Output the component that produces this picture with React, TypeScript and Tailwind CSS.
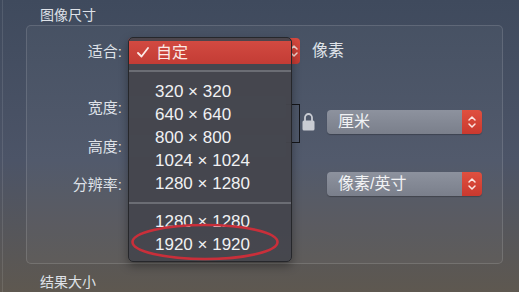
import React from "react";

const Chevrons = ({ cls }: { cls: string }) => (
  <svg width="10" height="16" viewBox="0 0 10 16" className={cls}>
    <path d="M2 6 L5 3 L8 6" fill="none" stroke="currentColor" strokeWidth="1.5" strokeLinecap="round" strokeLinejoin="round" />
    <path d="M2 10 L5 13 L8 10" fill="none" stroke="currentColor" strokeWidth="1.5" strokeLinecap="round" strokeLinejoin="round" />
  </svg>
);

const Dropdown = ({ label }: { label: string }) => (
  <div className="flex h-[24px] w-[155px] overflow-hidden rounded-[4px] shadow-[0_1px_1px_rgba(0,0,0,0.25)]">
    <div className="flex flex-1 items-center bg-[linear-gradient(180deg,#8d929e,#7a7f8b)] pl-[11px] text-[16px] leading-none text-[#f1f2f4]">
      {label}
    </div>
    <div className="flex w-[20px] items-center justify-center bg-[linear-gradient(180deg,#e0503f,#c9392f)] text-[#fbe6e2]">
      <Chevrons cls="" />
    </div>
  </div>
);

const Lock = () => (
  <svg width="13" height="19" viewBox="0 0 13 19">
    <path d="M3 9 V5.5 a3.5 3.5 0 0 1 7 0 V9" fill="none" stroke="#c9ccd3" strokeWidth="1.8" />
    <rect x="0.5" y="8.5" width="12" height="10" rx="1.5" fill="#c9ccd3" />
  </svg>
);

const Check = () => (
  <svg width="12" height="11" viewBox="0 0 12 11">
    <path d="M1 6 L4.5 9.5 L11 1" fill="none" stroke="#fbe9e6" strokeWidth="1.8" strokeLinecap="round" strokeLinejoin="round" />
  </svg>
);

const items1 = ["320 × 320", "640 × 640", "800 × 800", "1024 × 1024", "1280 × 1280"];
const items2 = ["1280 × 1280", "1920 × 1920"];

export default function App() {
  return (
    <div
      className="relative flex h-[292px] w-[519px] overflow-hidden bg-[linear-gradient(180deg,#3f4a5d_0%,#4c5467_55%,#5e5850_100%)] text-[#dfe2e8]"
      style={{ fontFamily: '"Liberation Sans", "Noto Sans CJK SC", sans-serif' }}
    >
      <div className="w-[3px] shrink-0 border-r border-white/10" />
      <div className="flex flex-1 flex-col">
        <div className="ml-[37px] pt-[5px] text-[14px] leading-[20px]">图像尺寸</div>
        <div className="ml-[23px] h-[240px] w-[477px] rounded-[5px] border border-white/[0.13] bg-white/[0.035]">
          {/* Row: 适合 */}
          <div className="mt-[12px] flex h-[26px] items-center">
            <div className="w-[95px] text-right text-[15px] leading-none">适合:</div>
            <div className="ml-[6px] flex h-[26px] w-[172px] items-center justify-end rounded-[4px] bg-[linear-gradient(180deg,#d94a40,#c43a33)] pr-[1px] text-[#f6d8d2]">
              <Chevrons cls="" />
            </div>
            <div className="ml-[12px] text-[16px] leading-none">像素</div>
          </div>
          {/* Rows: 宽度 / 高度 */}
          <div className="mt-[32px] flex h-[61px]">
            <div className="flex w-[95px] flex-col">
              <div className="flex h-[22px] items-center justify-end text-[15px] leading-none">宽度:</div>
              <div className="mt-[17px] flex h-[22px] items-center justify-end text-[15px] leading-none">高度:</div>
            </div>
            <div className="ml-[6px] flex w-[158px] flex-col">
              <div className="h-[22px] rounded-[3px] bg-[#5a6070]" />
              <div className="mt-[17px] h-[22px] rounded-[3px] bg-[#5a6070]" />
            </div>
            <div className="mt-[8px] h-[39px] w-[14px] border-y border-r border-[#15161a]" />
            <div className="ml-[2px] mt-[16px]">
              <Lock />
            </div>
            <div className="ml-[12px] mt-[14px]">
              <Dropdown label="厘米" />
            </div>
          </div>
          {/* Row: 分辨率 */}
          <div className="mt-[15px] flex h-[24px] items-center">
            <div className="w-[95px] text-right text-[15px] leading-none">分辨率:</div>
            <div className="ml-[205px]">
              <Dropdown label="像素/英寸" />
            </div>
          </div>
        </div>
        <div className="ml-[37px] mt-[8px] text-[14px] leading-[20px]">结果大小</div>
      </div>

      {/* Popup menu */}
      <div className="absolute left-[128px] top-[37px] h-[225px] w-[164px] rounded-[5px] border border-[#26272b] bg-[#44464d]/95 shadow-[0_4px_10px_rgba(0,0,0,0.35)]">
        <div className="pt-[3px]">
          <div className="flex h-[23px] items-center bg-[linear-gradient(180deg,#d24a41,#c33c35)] text-[#fbe9e6]">
            <span className="ml-[8px] flex w-[19px] items-center">
              <Check />
            </span>
            <span className="text-[16px] leading-none">自定</span>
          </div>
          <div className="mb-[8px] mt-[6px] h-[2px] bg-[#6b6d74]" />
          {items1.map((t) => (
            <div key={t + "a"} className="flex h-[23px] items-center pl-[26px] text-[17px] leading-none text-[#f0f1f3]">
              {t}
            </div>
          ))}
          <div className="flex h-[15px] items-center">
            <div className="mt-[1px] h-[2px] w-full bg-[#6b6d74]" />
          </div>
          {items2.map((t) => (
            <div key={t + "b"} className="flex h-[23px] items-center pl-[26px] text-[17px] leading-none text-[#f0f1f3]">
              {t}
            </div>
          ))}
        </div>
      </div>

      {/* Red annotation ellipse */}
      <svg className="pointer-events-none absolute left-0 top-0" width="519" height="292">
        <ellipse cx="205" cy="242" rx="72.5" ry="17" fill="none" stroke="#c92f3a" strokeWidth="2.6" />
      </svg>
    </div>
  );
}
